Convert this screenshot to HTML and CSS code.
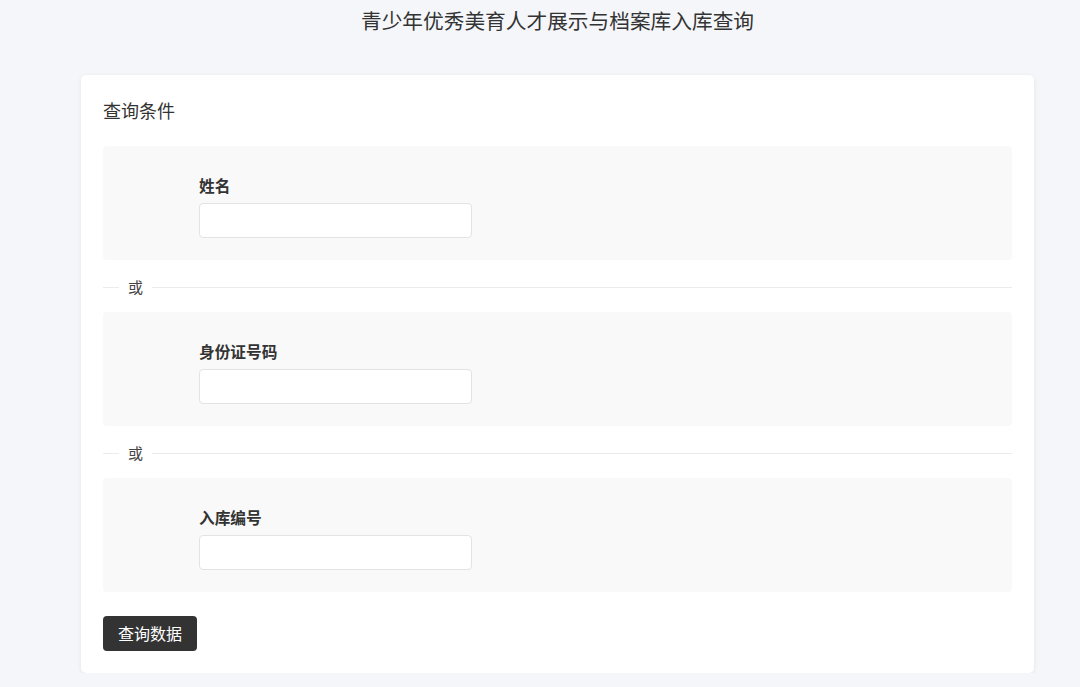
FILE: index.html
```html
<!DOCTYPE html>
<html lang="zh-CN">
<head>
<meta charset="utf-8">
<title>青少年优秀美育人才展示与档案库入库查询</title>
<link rel="stylesheet" href="styles.css">
</head>
<body>
<div class="page">
  <h1 class="page-title">青少年优秀美育人才展示与档案库入库查询</h1>
  <div class="card">
    <h2 class="card-title">查询条件</h2>
    <div class="field-box">
      <label class="field-label">姓名</label>
      <input class="field-input" type="text">
    </div>
    <div class="divider"><span class="divider-text">或</span></div>
    <div class="field-box">
      <label class="field-label">身份证号码</label>
      <input class="field-input" type="text">
    </div>
    <div class="divider"><span class="divider-text">或</span></div>
    <div class="field-box">
      <label class="field-label">入库编号</label>
      <input class="field-input" type="text">
    </div>
    <button class="btn-query" type="button">查询数据</button>
  </div>
</div>
</body>
</html>
```
FILE: styles.css
```css
html, body {
  margin: 0;
  padding: 0;
  background: #f5f6fa;
  font-family: "Noto Sans CJK SC", "Noto Sans", sans-serif;
  color: #333;
}
.page {
  width: 953px;
  margin-left: 81px;
}
.page-title {
  margin: 0;
  font-size: 20.7px;
  font-weight: 400;
  line-height: 40px;
  text-align: center;
  color: #333;
}
.card {
  margin-top: 35px;
  background: #fff;
  border-radius: 5px;
  box-shadow: 0 1px 4px rgba(0, 0, 0, 0.08);
  padding: 22px 22px 22px 22px;
  display: flex;
  flex-direction: column;
  align-items: flex-start;
}
.card-title {
  margin: 0 0 23px 0;
  font-size: 18px;
  font-weight: 400;
  line-height: 26px;
  color: #333;
}
.field-box {
  align-self: stretch;
  background: #f9f9f9;
  border-radius: 4px;
  padding: 29px 0 22px 96px;
  display: flex;
  flex-direction: column;
  align-items: flex-start;
  gap: 6px;
}
.field-label {
  font-size: 15.7px;
  font-weight: 700;
  line-height: 22px;
  color: #333;
}
.field-input {
  width: 273px;
  height: 35px;
  box-sizing: border-box;
  border: 1px solid #e3e3e3;
  border-radius: 4px;
  background: #fff;
  outline: none;
  margin: 0;
}
.divider {
  align-self: stretch;
  display: flex;
  align-items: center;
  margin: 17px 0 15px 0;
  height: 20px;
}
.divider::before {
  content: "";
  width: 16px;
  border-top: 1px solid #ececec;
}
.divider::after {
  content: "";
  flex: 1;
  border-top: 1px solid #ececec;
}
.divider-text {
  padding: 0 9px;
  font-size: 15px;
  line-height: 20px;
  color: #444;
}
.btn-query {
  margin-top: 24px;
  height: 35px;
  padding: 0 15px;
  border: none;
  border-radius: 4px;
  background: #333;
  color: #fff;
  font-family: "Noto Sans CJK SC", "Noto Sans", sans-serif;
  font-size: 16px;
  line-height: 35px;
  cursor: pointer;
}
```
